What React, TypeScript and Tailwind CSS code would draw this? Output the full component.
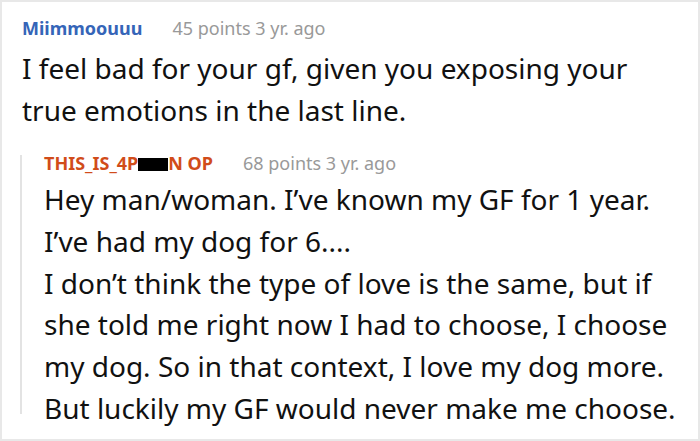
const font = { fontFamily: '"Noto Sans", "Open Sans", sans-serif' };

const Meta = ({ name, color, points }: { name: React.ReactNode; color: string; points: string }) => (
  <div className="flex items-baseline gap-[30px] text-[18px] leading-[16px]">
    <span className={`font-bold ${color}`}>{name}</span>
    <span className="text-[#999999]">{points} points 3 yr. ago</span>
  </div>
);

export default function App() {
  return (
    <div
      className="h-[441px] w-[700px] overflow-hidden border-2 border-[#e8e8e8] bg-white text-[#111111]"
      style={font}
    >
      <div className="pl-[20px] pt-[18px]">
        <Meta name="Miimmoouuu" color="text-[#3565b8]" points="45" />
        <p className="mt-[11px] text-[28px] leading-[42px]">
          I feel bad for your gf, given you exposing your
          <br />
          true emotions in the last line.
        </p>
      </div>
      <div className="ml-[18px] mt-[24px] flex gap-[22px]">
        <div className="mb-[16px] w-[2px] shrink-0 bg-[#e3e3e3]" />
        <div>
          <Meta
            name={
              <>
                THIS_IS_4P<span className="inline-block h-[13px] w-[30px] bg-black align-[-1px]" />N OP
              </>
            }
            color="text-[#d14c1a]"
            points="68"
          />
          <p className="mt-[8px] text-[28px] leading-[41.8px]">
            Hey man/woman. I’ve known my GF for 1 year.
            <br />
            I’ve had my dog for 6....
            <br />
            I don’t think the type of love is the same, but if
            <br />
            she told me right now I had to choose, I choose
            <br />
            my dog. So in that context, I love my dog more.
            <br />
            But luckily my GF would never make me choose.
          </p>
        </div>
      </div>
    </div>
  );
}
